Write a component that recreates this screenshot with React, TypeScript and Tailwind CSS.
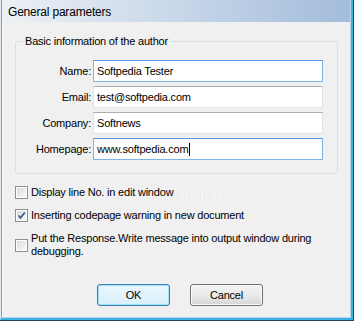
export default function App() {
  const fields = [
    { label: "Name:", value: "Softpedia Tester", active: true },
    { label: "Email:", value: "test@softpedia.com", active: false },
    { label: "Company:", value: "Softnews", active: false },
    { label: "Homepage:", value: "www.softpedia.com", active: true, caret: true },
  ];

  return (
    <div className="w-[354px] h-[321px] border-r border-b border-[#22415f] font-['Liberation_Sans',Arial,sans-serif] text-[11px] tracking-[-0.2px] text-black">
      <div className="h-full flex flex-col border-l border-l-[#e3eaf2] border-r-2 border-b-2 border-r-[#39b2e6] border-b-[#39b2e6]">
        <div className="h-full flex flex-col border-l border-l-[#6f9fd4] border-r border-b border-r-[#b9d4ee] border-b-[#b9d4ee]">
          <div className="h-[22px] shrink-0 flex items-center pl-[6px] pt-[1px] text-[12px] bg-gradient-to-r from-[#eef1f5] via-[#c8d7e9] to-[#a2bcdb]">
            General parameters
          </div>

          <div className="relative flex-1 flex flex-col bg-[#f0f0f0] border-l border-white">
            {/* faint site watermark, sits behind the option rows */}
            <div className="absolute left-[64px] top-[157px] text-[22px] font-bold tracking-[4px] text-[#f4f4f4] [text-shadow:0_0_1px_#dedede] pointer-events-none select-none">
              SOFTPEDIA<span className="text-[7px] align-top">™</span>
            </div>

            <fieldset className="relative mx-[12px] mt-[13px] rounded-[3px] border border-[#d5dfe5] pb-[13px]">
              <legend className="ml-[7px] px-[2px] leading-[13px]">Basic information of the author</legend>
              <div className="grid grid-cols-[75px_230px] gap-x-[2px] gap-y-[4px] pt-[12px]">
                {fields.map((f) => (
                  <div key={f.label} className="contents">
                    <div className="text-right self-center">{f.label}</div>
                    <div
                      className={
                        f.active
                          ? "h-[22px] flex items-center pl-[3px] bg-white border border-[#7eb4ea] border-t-[#569de5]"
                          : "h-[22px] flex items-center pl-[3px] bg-white border border-[#e2e3ea] border-t-[#abadb3]"
                      }
                    >
                      <span>{f.value}</span>
                      {f.caret && <span className="ml-[1px] w-[1px] h-[13px] bg-black" />}
                    </div>
                  </div>
                ))}
              </div>
            </fieldset>

            <div className="relative mx-[12px] mt-[12px] flex flex-col gap-[10px]">
              <CheckRow label="Display line No. in edit window" />
              <CheckRow label="Inserting codepage warning in new document" checked />
              <CheckRow label={"Put the Response.Write message into output window during\ndebugging."} />
            </div>

            <div className="mt-auto mb-[11px] flex justify-center gap-[20px] pl-[7px]">
              <button className="w-[73px] h-[22px] rounded-[3px] border border-[#3c7fb1] bg-gradient-to-b from-[#eaf6fd] to-[#d9f0fc] shadow-[inset_0_0_0_1px_#9fe2fb]">
                OK
              </button>
              <button className="w-[73px] h-[22px] rounded-[3px] border border-[#707070] bg-gradient-to-b from-[#f2f2f2] via-[#ebebeb] to-[#d5d5d5] shadow-[inset_0_0_0_1px_#fcfcfc]">
                Cancel
              </button>
            </div>
          </div>
        </div>
      </div>
    </div>
  );
}

function CheckRow({ label, checked }: { label: string; checked?: boolean }) {
  return (
    <div className="flex items-center gap-[3px]">
      <div className="w-[13px] h-[13px] shrink-0 border border-[#8e8f8f] bg-white p-[1px]">
        <div className="w-full h-full bg-gradient-to-br from-[#d9d9d9] to-[#fafafa] relative">
          {checked && (
            <svg viewBox="0 0 9 9" className="absolute inset-0 w-full h-full">
              <path d="M1.5 4.5 L3.5 6.8 L7.8 1.5" fill="none" stroke="#3c5aa0" strokeWidth="1.8" />
            </svg>
          )}
        </div>
      </div>
      <div className="whitespace-pre-line leading-[13px]">{label}</div>
    </div>
  );
}
